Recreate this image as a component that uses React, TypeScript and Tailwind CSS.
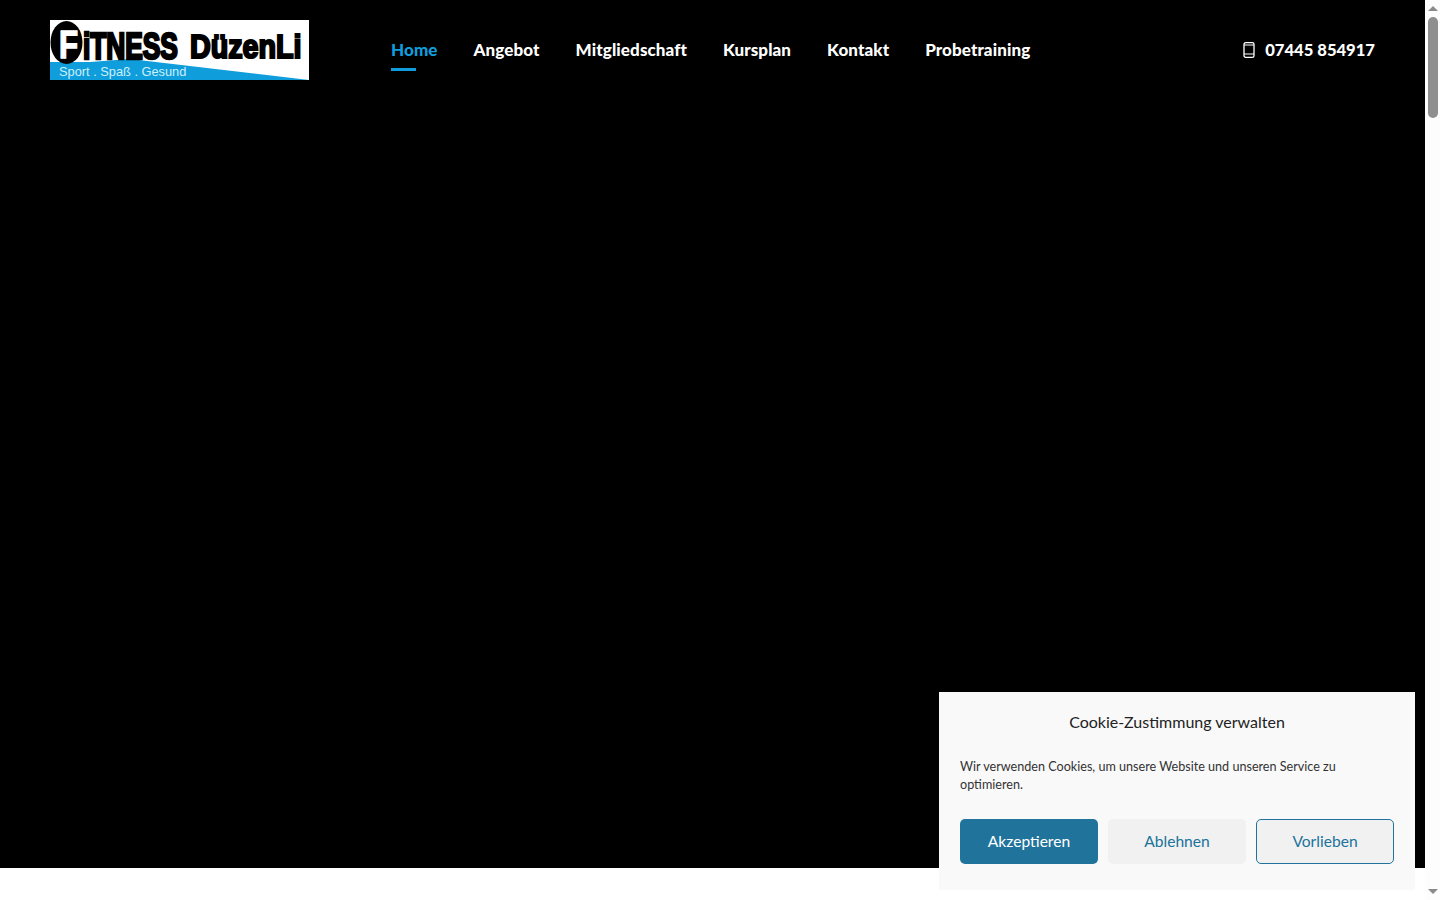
const navItems = ["Home", "Angebot", "Mitgliedschaft", "Kursplan", "Kontakt", "Probetraining"];

const logoFont = "'Liberation Sans', sans-serif";

function Logo() {
  return (
    <svg width="259" height="60" viewBox="0 0 259 60" className="block shrink-0">
      <rect width="259" height="60" fill="#fff" />
      <polygon points="0,42 40,42 80,39 259,60 0,60" fill="#0f9ddc" />
      <ellipse cx="16.5" cy="22.5" rx="16" ry="21.5" fill="#000" />
      <text transform="translate(9 38) scale(0.8 1)" fontFamily={logoFont} fontWeight="700" fontSize="39" fill="#fff" stroke="#fff" strokeWidth="1.5">F</text>
      <text transform="translate(33 39) scale(0.73 1)" fontFamily={logoFont} fontWeight="700" fontSize="36" fill="#000" stroke="#000" strokeWidth="2.6">iTNESS</text>
      <text transform="translate(140 38) scale(0.87 1)" fontFamily={logoFont} fontWeight="700" fontSize="33" fill="#000" stroke="#000" strokeWidth="2.2">DüzenLi</text>
      <text x="9" y="56" fontFamily={logoFont} fontSize="12.8" fill="#cdf0fa">Sport . Spaß . Gesund</text>
    </svg>
  );
}

function PhoneIcon() {
  return (
    <svg width="12" height="16" viewBox="0 0 12 16" fill="none" stroke="#fff" strokeWidth="1.3" className="shrink-0">
      <rect x="1" y="0.7" width="10" height="14.6" rx="1.6" />
      <path d="M1 3h10M1 12h10" strokeWidth="1" />
    </svg>
  );
}

function Scrollbar() {
  return (
    <div className="flex h-full w-[15px] shrink-0 flex-col items-center bg-[#fdfdfd]">
      <div className="flex h-[17px] w-full shrink-0 items-center justify-center">
        <div className="h-0 w-0 border-x-[5px] border-b-[5px] border-x-transparent border-b-[#8a8a8a]" />
      </div>
      <div className="h-[101px] w-[10px] shrink-0 rounded-[5px] bg-[#8f8f8f]" />
      <div className="flex-1" />
      <div className="flex h-[17px] w-full shrink-0 items-center justify-center">
        <div className="h-0 w-0 border-x-[5px] border-t-[5px] border-x-transparent border-t-[#8a8a8a]" />
      </div>
    </div>
  );
}

function CookieBanner() {
  return (
    <div className="fixed bottom-[10px] right-[25px] flex h-[198px] w-[476px] flex-col bg-[#f9f9f9] px-[21px] pt-[20px] font-['Lato',sans-serif] text-[#222]">
      <h2 className="text-center text-[16px] leading-5 font-normal">Cookie-Zustimmung verwalten</h2>
      <p className="mt-[26px] text-[12.6px] leading-[18px] text-[#333]">
        Wir verwenden Cookies, um unsere Website und unseren Service zu optimieren.
      </p>
      <div className="mt-[25px] grid grid-cols-3 gap-[10px]">
        <button className="h-[45px] rounded-[5px] bg-[#20739b] text-[15.6px] text-white">Akzeptieren</button>
        <button className="h-[45px] rounded-[5px] bg-[#f1f1f1] text-[15.6px] text-[#20739b]">Ablehnen</button>
        <button className="h-[45px] rounded-[5px] border border-[#20739b] bg-[#f1f1f1] text-[15.6px] text-[#20739b]">Vorlieben</button>
      </div>
    </div>
  );
}

export default function App() {
  return (
    <div className="flex h-screen overflow-hidden bg-white font-['Lato',sans-serif]">
      <main className="min-w-0 flex-1">
        <div className="h-[868px] bg-black">
          <header className="flex h-[100px] items-center px-[50px]">
            <Logo />
            <nav className="ml-[82px] flex h-full items-center gap-9">
              {navItems.map((item, i) => (
                <a
                  key={item}
                  href="#"
                  className={`relative flex h-[42px] items-center text-[17px] font-black tracking-[0.1px] ${i === 0 ? "text-[#0f9ddc]" : "text-white"}`}
                >
                  {item}
                  {i === 0 && <span className="absolute bottom-0 left-0 h-[3px] w-[25px] bg-[#0f9ddc]" />}
                </a>
              ))}
            </nav>
            <div className="ml-auto flex items-center gap-[10px] text-[16.6px] font-black text-white">
              <PhoneIcon />
              <span className="pt-px">07445 854917</span>
            </div>
          </header>
        </div>
      </main>
      <Scrollbar />
      <CookieBanner />
    </div>
  );
}
